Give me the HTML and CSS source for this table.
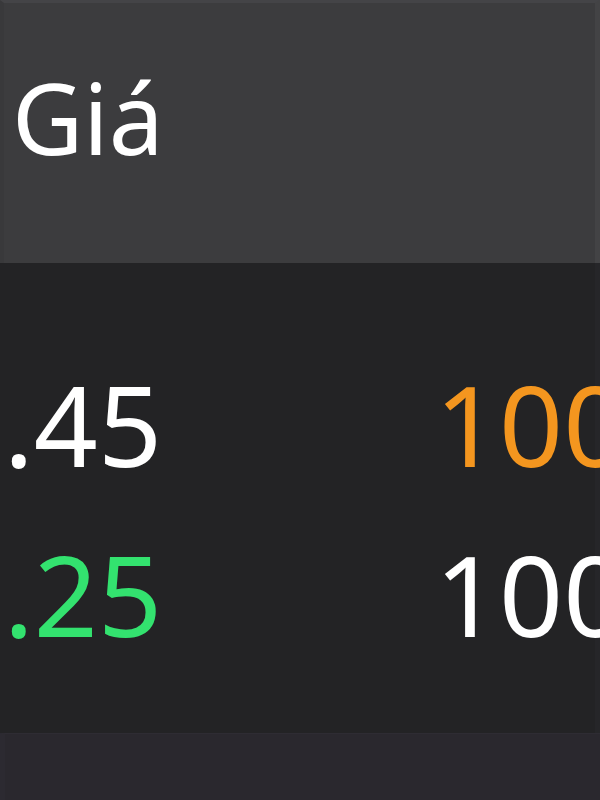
FILE: index.html
```html
<!doctype html>
<html lang="vi">
<head>
	<meta charset="UTF-8">
	<title>Bảng giá</title>
	<link rel="stylesheet" href="styles.css">
</head>
<body>
	<div class="board">
		<div class="board-head">
			<span class="col-title">Giá</span>
		</div>
		<div class="board-body">
			<div class="row">
				<div class="cell price">1.45</div>
				<div class="cell qty up">100</div>
			</div>
			<div class="row">
				<div class="cell price down">1.25</div>
				<div class="cell qty">100</div>
			</div>
		</div>
		<div class="board-foot"></div>
	</div>
</body>
</html>
```

FILE: styles.css
```css
body {
	margin: 0;
	padding: 0;
	background: #232325;
	font-family: "Noto Sans", "Open Sans", sans-serif;
	color: #fff;
}
.board {
	width: 600px;
	height: 800px;
	overflow: hidden;
	display: flex;
	flex-direction: column;
}
.board-head {
	height: 263px;
	box-sizing: border-box;
	padding: 50px 0 0 12px;
	background: #3c3c3e;
	border-top: 3px solid #444447;
	border-left: 4px solid #39393b;
	border-right: 5px solid #434345;
}
.col-title {
	font-size: 98px;
	line-height: normal;
	display: block;
	margin-top: -3px;
	margin-left: -4px;
}
.board-body {
	height: 470px;
	box-sizing: border-box;
	padding-top: 76px;
	background: #232325;
	border-right: 5px solid #262629;
}
.row {
	display: grid;
	grid-template-columns: 162px 1fr;
	column-gap: 273px;
	height: 170px;
}
.cell {
	font-size: 112px;
	line-height: 170px;
	white-space: nowrap;
}
.price {
	display: flex;
	justify-content: flex-end;
}
.up {
	color: #f4961f;
}
.down {
	color: #33e26f;
}
.board-foot {
	flex: 1;
	background: #2a282e;
	border-top: 1px solid #2e2c33;
	border-left: 5px solid #2c2a31;
}
```
